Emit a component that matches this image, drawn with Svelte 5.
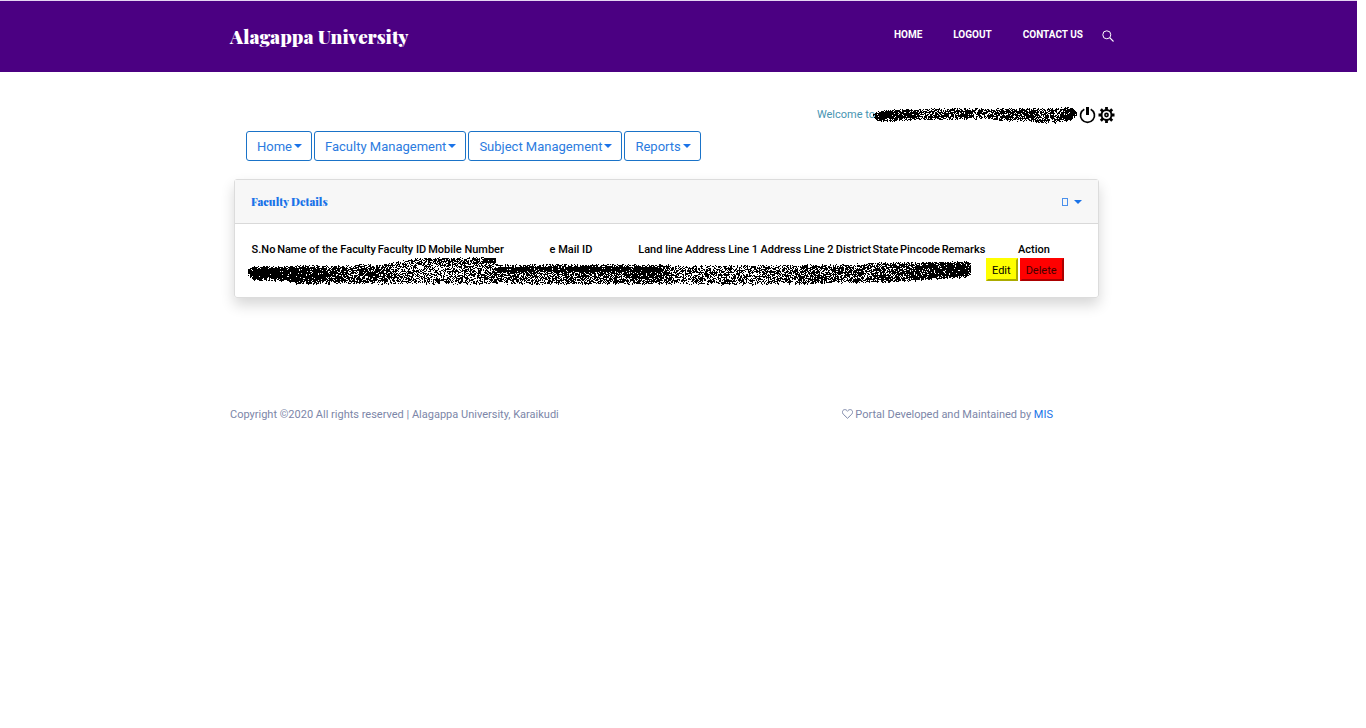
<script>
  const navLinks = ['Home', 'Logout', 'Contact us']
  const menus = ['Home', 'Faculty Management', 'Subject Management', 'Reports']

  const columns = [
    { label: 'S.No', width: 25 },
    { label: 'Name of the Faculty', width: 101 },
    { label: 'Faculty ID', width: 50 },
    { label: 'Mobile Number', width: 78 },
    { label: 'e Mail ID', width: 132 },
    { label: 'Land line', width: 47 },
    { label: 'Address Line 1', width: 75 },
    { label: 'Address Line 2', width: 76 },
    { label: 'District', width: 37 },
    { label: 'State', width: 27 },
    { label: 'Pincode', width: 42 },
    { label: 'Remarks', width: 45 }
  ]

  // speckled marker strokes over private data, each stop is [x, top, bottom, density]
  const userStops = [
    [0, 7, 10, 1], [5, 4, 14, 0.97], [20, 2, 13, 0.92], [42, 2, 12, 0.88], [50, 1, 12, 0.66],
    [72, 1, 12, 0.7], [88, 1, 11, 0.82], [110, 1, 11, 0.76], [135, 1, 13, 0.78],
    [158, 1, 13, 0.88], [168, 1, 15, 0.66], [185, 1, 15, 0.7], [192, 0, 13, 0.95],
    [199, 0, 12, 0.98], [203, 3, 8, 0.9]
  ]
  const rowStops = [
    [0, 13, 19, 1], [4, 10, 23, 0.98], [35, 10, 24, 0.97], [50, 9, 27, 0.9], [75, 9, 27, 0.9],
    [100, 9, 26, 0.74], [135, 8, 27, 0.75], [150, 5, 27, 0.55], [175, 2, 27, 0.53],
    [245, 1, 27, 0.56], [250, 8, 27, 0.66], [330, 8, 27, 0.66], [385, 8, 27, 0.76],
    [410, 8, 27, 0.86], [430, 9, 27, 0.56], [500, 9, 28, 0.56], [540, 9, 27, 0.64],
    [600, 8, 26, 0.68], [645, 6, 25, 0.74], [690, 6, 22, 0.92], [715, 5, 21, 0.95],
    [722, 6, 18, 0.85]
  ]
  const rowLines = [
    [160, 247, 2, 8, 0.35],
    [235, 248, 2, 7, 0.9],
    [250, 410, 11, 16, 0.8]
  ]

  const speckle = (stops, lines = []) => {
    let seed = 7919
    const rand = () => {
      seed = (seed * 16807) % 2147483647
      return seed / 2147483647
    }
    let d = ''
    const last = stops[stops.length - 1][0]
    let s = 0
    for (let x = 0; x <= last; x++) {
      while (s < stops.length - 2 && x > stops[s + 1][0]) s++
      const a = stops[s]
      const b = stops[s + 1]
      const t = (x - a[0]) / (b[0] - a[0])
      const mix = (i) => a[i] + (b[i] - a[i]) * t
      const top = Math.round(mix(1) + rand() * 2 - 0.5)
      const bottom = Math.round(mix(2) - rand() * 2 + 1)
      for (let y = top; y <= bottom; y++) {
        const edge = y - top < 2 || bottom - y < 2 ? 0.8 : 1
        if (rand() < mix(3) * edge) d += `M${x} ${y}h1v1h-1z`
      }
    }
    for (const [from, to, top, bottom, density] of lines) {
      for (let x = from; x < to; x++) {
        for (let y = top; y < bottom; y++) {
          if (rand() < density) d += `M${x} ${y}h1v1h-1z`
        }
      }
    }
    return d
  }

  const userMark = speckle(userStops)
  const rowMark = speckle(rowStops, rowLines)
</script>

<header class="site-header">
  <div class="container header-inner">
    <a class="brand" href="#home">Alagappa University</a>
    <nav class="site-nav">
      {#each navLinks as link}
        <a href="#{link}">{link}</a>
      {/each}
      <button class="icon-btn search" aria-label="Search">
        <svg width="12" height="12" viewBox="0 0 12 12" fill="none" stroke="#fff">
          <circle cx="4.8" cy="4.8" r="4" />
          <path d="M7.7 7.7l3.8 3.8" stroke-width="1.1" />
        </svg>
      </button>
    </nav>
  </div>
</header>

<main class="container">
  <div class="welcome">
    <span>Welcome to</span>
    <svg class="user-mark" width="204" height="17" shape-rendering="crispEdges" aria-hidden="true">
      <path d={userMark} />
    </svg>
    <button class="icon-btn" aria-label="Log out">
      <svg width="17" height="18" viewBox="0 0 17 18" fill="none" stroke="#000">
        <path d="M5.3 3.2A7 7 0 1 0 11.7 3.2" stroke-width="1.7" />
        <path d="M8.5 1v8" stroke-width="3" />
      </svg>
    </button>
    <button class="icon-btn" aria-label="Settings">
      <svg width="17" height="18" viewBox="0 0 17 18" fill="none" stroke="#000">
        <circle cx="8.5" cy="9" r="5" stroke-width="2" />
        <circle cx="8.5" cy="9" r="1.6" stroke-width="1.6" />
        <path
          d="M8.5 1v3M8.5 14v3M.5 9h3M13.5 9h3M2.8 3.3l2.2 2.2M12 12.5l2.2 2.2M14.2 3.3L12 5.5M5 12.5l-2.2 2.2"
          stroke-width="2.8"
        />
      </svg>
    </button>
  </div>

  <div class="menus">
    {#each menus as menu}
      <button class="menu-btn">{menu}<span class="caret"></span></button>
    {/each}
  </div>

  <section class="card">
    <div class="card-header">
      <h2>Faculty Details</h2>
      <button class="card-menu" aria-label="Options">
        <span class="box"></span>
        <span class="caret"></span>
      </button>
    </div>
    <div class="card-body">
      <table>
        <colgroup>
          {#each columns as column}
            <col style="width: {column.width}px" />
          {/each}
          <col />
        </colgroup>
        <thead>
          <tr>
            {#each columns as column}
              <th>{column.label}</th>
            {/each}
            <th>Action</th>
          </tr>
        </thead>
        <tbody>
          <tr>
            <td class="hidden-data" colspan={columns.length}>
              <svg width="724" height="30" shape-rendering="crispEdges" aria-hidden="true">
                <path d={rowMark} />
              </svg>
            </td>
            <td>
              <div class="actions">
                <button class="edit">Edit</button>
                <button class="delete">Delete</button>
              </div>
            </td>
          </tr>
        </tbody>
      </table>
    </div>
  </section>
</main>

<footer class="container footer">
  <span>Copyright ©2020 All rights reserved | Alagappa University, Karaikudi</span>
  <span class="credit">
    <svg width="11" height="10" viewBox="0 0 11 10" fill="none" stroke="#7c86a8">
      <path d="M5.5 9.3L1.2 5.1C-.7 2.8 1 .6 2.8.6c1.3 0 2.1.7 2.7 1.7C6.1 1.3 6.9.6 8.2.6c1.8 0 3.500 2.200 1.600 4.500z" />
    </svg>
    Portal Developed and Maintained by <a href="#mis">MIS</a>
  </span>
</footer>

<style>
  :global(body) {
    padding-right: 9px;
    background: #fff;
    font-family: Roboto, 'Liberation Sans', sans-serif;
    font-size: 11px;
    line-height: 16px;
  }

  button {
    font-family: inherit;
    cursor: pointer;
  }

  a {
    text-decoration: none;
  }

  .container {
    max-width: 897px;
    margin: 0 auto;
  }

  .site-header {
    background: #4b0082;
    border-top: 1px solid #e6d5f3;
  }

  .header-inner {
    display: flex;
    align-items: center;
    justify-content: space-between;
    height: 69px;
    padding-bottom: 2px;
  }

  .brand {
    color: #fff;
    font-family: 'Playfair Display', 'Liberation Serif', serif;
    font-size: 19px;
    font-weight: 900;
    line-height: 24px;
  }

  .site-nav {
    display: flex;
    align-items: center;
    gap: 31px;
    padding: 0 13px 2px 0;
  }

  .site-nav a {
    color: #fff;
    font-size: 10px;
    font-weight: 700;
    text-transform: uppercase;
  }

  .icon-btn {
    display: flex;
    padding: 0;
    border: 0;
    background: none;
  }

  .search {
    margin: 2px 0 0 -12px;
  }

  .welcome {
    display: flex;
    align-items: center;
    justify-content: flex-end;
    gap: 2px;
    padding: 34px 12px 0 0;
    color: #4795b3;
  }

  .user-mark {
    margin-left: -4px;
  }

  .menus {
    display: flex;
    gap: 2px;
    margin: 7px 16px 0;
  }

  .menu-btn {
    display: flex;
    align-items: center;
    padding: 7px 9px 5px 10px;
    border: 1px solid #1a73c8;
    border-radius: 3px;
    background: #fff;
    color: #2b7be0;
    font-size: 13px;
    line-height: 16px;
  }

  .caret {
    margin-left: 2px;
    border: 4px solid transparent;
    border-top-color: #1a73e8;
    border-bottom: 0;
  }

  .menu-btn .caret {
    margin-bottom: 2px;
  }

  .card {
    margin: 18px 28px 0 4px;
    border: 1px solid #dcdcdc;
    border-radius: 3px;
    box-shadow: 0 7px 14px rgba(0, 0, 0, 0.16);
  }

  .card-header {
    display: flex;
    align-items: center;
    justify-content: space-between;
    height: 43px;
    padding: 0 16px;
    border-bottom: 1px solid #d9d9d9;
    background: #f7f7f7;
  }

  h2 {
    margin: 0;
    color: #1a73e8;
    font-family: 'Playfair Display', 'Liberation Serif', serif;
    font-size: 11px;
    font-weight: 900;
  }

  .card-menu {
    display: flex;
    align-items: center;
    gap: 4px;
    padding: 0;
    border: 0;
    background: none;
  }

  .box {
    width: 4px;
    height: 6px;
    border: 1px solid #4a90ec;
  }

  .card-body {
    padding: 17px 16px 16px;
  }

  table {
    width: 100%;
    table-layout: fixed;
    border-collapse: collapse;
  }

  th,
  td {
    padding: 0;
    white-space: nowrap;
  }

  th {
    font-weight: 500;
    line-height: 17px;
  }

  .hidden-data {
    position: relative;
  }

  .hidden-data svg {
    position: absolute;
    top: -2px;
    left: -3px;
  }

  .actions {
    display: flex;
    gap: 2px;
  }

  .actions button {
    padding: 3px 5px 1px 4px;
    border-width: 2px;
    border-style: outset;
    font-size: 11px;
    line-height: 15px;
  }

  .edit {
    border-color: #ff0;
    background: #ff0;
  }

  .delete {
    border-color: #f00;
    background: #f00;
    color: #400;
  }

  .footer {
    display: flex;
    justify-content: space-between;
    margin-top: 109px;
    color: #7c86a8;
  }

  .credit {
    margin-right: 74px;
  }

  .credit svg {
    vertical-align: -1px;
  }

  .credit a {
    color: #1a73e8;
  }
</style>
